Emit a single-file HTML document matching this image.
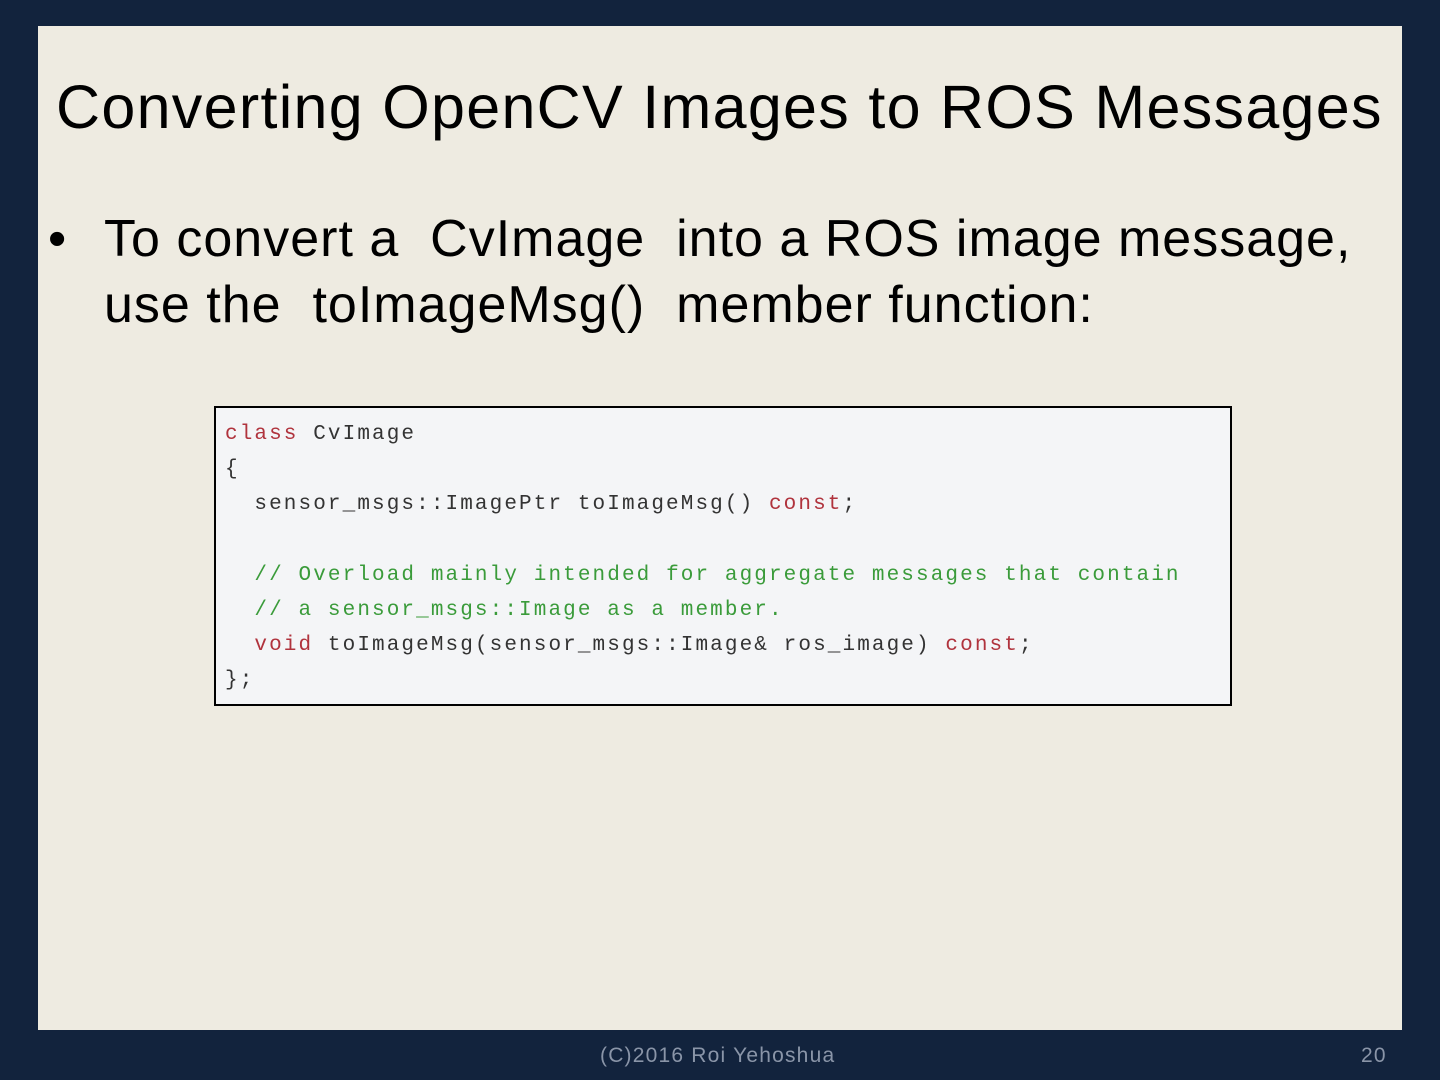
<!DOCTYPE html>
<html><head><style>
body{margin:0;width:1440px;height:1080px;background:#12233d;position:relative;overflow:hidden;font-family:"Liberation Sans",sans-serif}
.slide{position:absolute;left:38px;top:26px;width:1364px;height:1004px;background:#eeebe1}
.t{position:absolute;left:18px;top:46px;font-size:61px;color:#000;white-space:nowrap;letter-spacing:1.3px}
.b{position:absolute;left:66px;top:180px;font-size:52px;line-height:66px;color:#000;white-space:nowrap;letter-spacing:1px}
.dot{position:absolute;left:-56px;top:0}
.code{position:absolute;left:176px;top:380px;width:1014px;height:296px;background:#f4f5f7;border:2px solid #000}
pre{margin:0;position:absolute;left:9px;top:9px;font-family:"Liberation Mono",monospace;font-size:21px;letter-spacing:2.1px;line-height:35.2px;color:#333}
.k{color:#b0333d}.c{color:#3a9b3a}
.f{position:absolute;top:1044px;font-size:21px;color:#8a95a8;letter-spacing:1.2px}
</style></head><body>
<div class="slide">
<div class="t">Converting OpenCV Images to ROS Messages</div>
<div class="b"><span class="dot">•</span>To convert a &nbsp;CvImage &nbsp;into a ROS image message,<br>use the &nbsp;toImageMsg() &nbsp;member function:</div>
<div class="code"><pre><span class="k">class</span> CvImage
{
  sensor_msgs::ImagePtr toImageMsg() <span class="k">const</span>;

  <span class="c">// Overload mainly intended for aggregate messages that contain</span>
  <span class="c">// a sensor_msgs::Image as a member.</span>
  <span class="k">void</span> toImageMsg(sensor_msgs::Image&amp; ros_image) <span class="k">const</span>;
};</pre></div>
</div>
<div class="f" style="left:600px">(C)2016 Roi Yehoshua</div>
<div class="f" style="left:1361px">20</div>
</body></html>
